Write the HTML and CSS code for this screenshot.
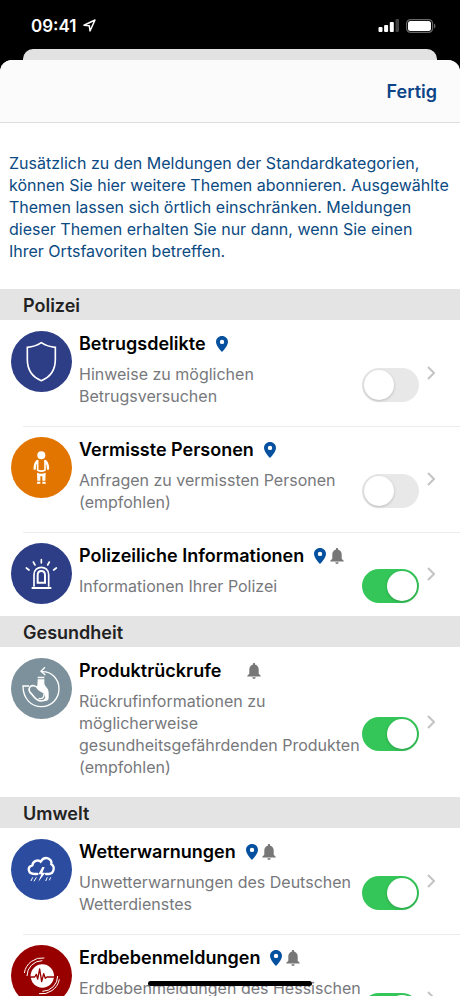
FILE: index.html
```html
<!DOCTYPE html>
<html lang="de">
<head>
<meta charset="utf-8">
<meta name="viewport" content="width=device-width, initial-scale=1">
<title>Themen abonnieren</title>
<link rel="stylesheet" href="styles.css">
</head>
<body>
<svg class="defs" aria-hidden="true">
  <symbol id="pin" viewBox="0 0 12 16"><path fill-rule="evenodd" d="M6 0C2.700 0 0 2.600 0 5.900 0 10 6 16 6 16s6-6 6-10.100C12 2.600 9.300 0 6 0zm0 8.100a2.200 2.200 0 1 1 0-4.400 2.200 2.200 0 0 1 0 4.400z"/></symbol>
  <symbol id="bell" viewBox="0 0 14 16"><path d="M7 0c-.7 0-1.200.5-1.200 1.200v.5C3.600 2.200 2.300 4.100 2.300 6.500v4.200L.3 12.700v.8h13.400v-.8l-2-2V6.500c0-2.400-1.300-4.300-3.500-4.800v-.5C8.200.5 7.700 0 7 0zM5.300 14.300a1.700 1.700 0 0 0 3.400 0z"/></symbol>
  <symbol id="chevron" viewBox="0 0 8 14"><path d="M1 1l6 6-6 6" fill="none" stroke="currentColor" stroke-width="2"/></symbol>
</svg>
<div class="phone">
  <header class="status">
    <div class="clock">
      <span>09:41</span>
      <svg class="location" viewBox="0 0 13 13" aria-hidden="true"><path d="M1 6.300L12 1 7 12 6.300 6.700z" fill="none" stroke="currentColor" stroke-width="1.500" stroke-linejoin="round"/></svg>
    </div>
    <div class="indicators">
      <svg class="signal" viewBox="0 0 20 13" aria-hidden="true"><rect y="8" width="4" height="5" rx="1"/><rect x="5.600" y="6" width="4" height="7" rx="1"/><rect x="11.300" y="3" width="4" height="10" rx="1"/><rect x="17" width="3.500" height="13" rx="1" opacity=".25"/></svg>
      <svg class="battery" viewBox="0 0 30 14" aria-hidden="true"><rect x=".6" y=".6" width="26" height="12.800" rx="4" fill="none" stroke="currentColor" stroke-width="1.200" opacity=".4"/><rect x="2" y="2" width="23" height="10" rx="2.500"/><path d="M28 4.500v5q1.500-.8 1.500-2.500T28 4.500z" opacity=".4"/></svg>
    </div>
  </header>
  <div class="backsheet"></div>
  <main class="sheet">
    <nav class="bar"><button class="done" type="button">Fertig</button></nav>
    <p class="intro">Zusätzlich zu den Meldungen der Standardkategorien, können Sie hier weitere Themen abonnieren. Ausgewählte Themen lassen sich örtlich einschränken. Meldungen dieser Themen erhalten Sie nur dann, wenn Sie einen Ihrer Ortsfavoriten betreffen.</p>

    <h2 class="group">Polizei</h2>
    <ul class="topics">
      <li class="topic">
        <svg class="badge navy" viewBox="0 0 183 183" aria-hidden="true"><path d="M91 35C79 43 65 48 49 49V85C49 116 65 139 91 149C117 139 133 116 133 85V49C117 48 103 43 91 35Z" fill="none" stroke="#fff" stroke-width="5"/></svg>
        <div class="body">
          <div class="heading"><label for="fraud">Betrugsdelikte</label><svg class="pin"><use href="#pin"/></svg></div>
          <div class="detail"><p>Hinweise zu möglichen Betrugsversuchen</p><input class="switch" id="fraud" type="checkbox" role="switch"></div>
        </div>
        <svg class="chevron" aria-hidden="true"><use href="#chevron"/></svg>
      </li>
      <li class="topic">
        <svg class="badge orange" viewBox="0 0 183 183" aria-hidden="true"><g fill="none" stroke="#fff" stroke-linecap="round" stroke-linejoin="round"><path d="M78 73Q71 80 71 95" stroke-width="7"/><path d="M104 73Q111 80 111 95" stroke-width="7"/><path d="M80 71V100Q91 105 102 100V71" stroke-width="5"/></g><g fill="#fff"><circle cx="91" cy="55" r="12"/><path d="M78 107Q91 113 104 107L103 131H94V118H88V131H79ZM79 134H88V140H77ZM94 134H103L105 140H94Z"/></g></svg>
        <div class="body">
          <div class="heading"><label for="missing">Vermisste Personen</label><svg class="pin"><use href="#pin"/></svg></div>
          <div class="detail"><p>Anfragen zu vermissten Personen (empfohlen)</p><input class="switch" id="missing" type="checkbox" role="switch"></div>
        </div>
        <svg class="chevron" aria-hidden="true"><use href="#chevron"/></svg>
      </li>
      <li class="topic">
        <svg class="badge navy" viewBox="0 0 183 183" aria-hidden="true"><g fill="none" stroke="#fff"><path d="M69 131V95C69 66 113 66 113 95V131" stroke-width="5"/><path d="M80 119V97C80 80 102 80 102 97V119Z" stroke-width="6"/><path d="M62 135H121" stroke-width="6"/><path d="M91 50V60M67 57L72 66M115 57L110 66M46 75L54 81M136 75L128 81" stroke-width="5" stroke-linecap="round"/></g></svg>
        <div class="body">
          <div class="heading"><label for="police">Polizeiliche Informationen</label><svg class="pin"><use href="#pin"/></svg><svg class="bell"><use href="#bell"/></svg></div>
          <div class="detail"><p>Informationen Ihrer Polizei</p><input class="switch" id="police" type="checkbox" role="switch" checked></div>
        </div>
        <svg class="chevron" aria-hidden="true"><use href="#chevron"/></svg>
      </li>
    </ul>

    <h2 class="group">Gesundheit</h2>
    <ul class="topics">
      <li class="topic">
        <svg class="badge slate" viewBox="0 0 183 183" aria-hidden="true"><g fill="none" stroke="#fff" stroke-width="4"><path d="M91 41C121 39 144 62 144 92C144 122 121 146 91 146C61 146 36 122 36 84H54"/><path d="M102 28L90 40L103 51"/></g><path d="M80 56H100V61H80ZM80 64H100V76C100 84 113 90 113 104V120Q113 129 102 129H84L76 90Q80 84 80 64Z" fill="#fff"/><path d="M56 88C63 79 76 83 81 92C86 99 96 99 102 108C109 119 103 129 91 129C76 129 68 116 62 108C54 101 52 95 56 88Z" fill="#7c919b" stroke="#fff" stroke-width="5"/><path d="M83 121Q99 126 99 108" fill="none" stroke="#fff" stroke-width="4"/></svg>
        <div class="body">
          <div class="heading"><label for="recall">Produktrückrufe</label><span class="pin"></span><svg class="bell"><use href="#bell"/></svg></div>
          <div class="detail"><p>Rückrufinformationen zu möglicherweise gesundheitsgefährdenden Produkten (empfohlen)</p><input class="switch" id="recall" type="checkbox" role="switch" checked></div>
        </div>
        <svg class="chevron" aria-hidden="true"><use href="#chevron"/></svg>
      </li>
    </ul>

    <h2 class="group">Umwelt</h2>
    <ul class="topics">
      <li class="topic">
        <svg class="badge blue" viewBox="0 0 183 183" aria-hidden="true"><g fill="none" stroke="#fff"><path d="M79 105H70C51 105 47 84 64 79C66 65 82 61 89 68C101 48 124 59 121 76C133 83 129 105 113 105H105" stroke-width="7" stroke-linecap="round"/><path d="M65 115L60 126M76 115L69 127M109 115L104 126M119 115L115 124" stroke-width="3"/></g><path d="M94 84L82 106H91L82 128L103 101H94L101 84Z" fill="#fff"/></svg>
        <div class="body">
          <div class="heading"><label for="weather">Wetterwarnungen</label><svg class="pin"><use href="#pin"/></svg><svg class="bell"><use href="#bell"/></svg></div>
          <div class="detail"><p>Unwetterwarnungen des Deutschen Wetterdienstes</p><input class="switch" id="weather" type="checkbox" role="switch" checked></div>
        </div>
        <svg class="chevron" aria-hidden="true"><use href="#chevron"/></svg>
      </li>
      <li class="topic">
        <svg class="badge red" viewBox="0 0 183 183" aria-hidden="true"><circle cx="94" cy="93" r="35" fill="#fff"/><g fill="none" stroke="#fff" stroke-width="3"><path d="M48 93A46 46 0 0 1 94 47M40 84A54 54 0 0 1 100 39M140 93A46 46 0 0 1 94 139M145 103A54 54 0 0 1 84 146"/></g><path d="M58 96H71L76 88L80 102L86 72L92 110L98 86L103 100L108 96H130" fill="none" stroke="#980000" stroke-width="4" stroke-linejoin="round"/></svg>
        <div class="body">
          <div class="heading"><label for="quake">Erdbebenmeldungen</label><svg class="pin"><use href="#pin"/></svg><svg class="bell"><use href="#bell"/></svg></div>
          <div class="detail"><p>Erdbebenmeldungen des Hessischen Landesamtes für Naturschutz, Umwelt und Geologie</p><input class="switch" id="quake" type="checkbox" role="switch" checked></div>
        </div>
        <svg class="chevron" aria-hidden="true"><use href="#chevron"/></svg>
      </li>
    </ul>
  </main>
  <div class="home"></div>
</div>
</body>
</html>
```
FILE: styles.css
```css
* { box-sizing: border-box; }

body {
  margin: 0;
  background: #000;
  font-family: Inter, "Liberation Sans", sans-serif;
  font-size: 16px;
  line-height: 22px;
}

h2, p, ul { margin: 0; padding: 0; }

.defs { position: absolute; width: 0; height: 0; }

.phone {
  position: relative;
  display: flex;
  flex-direction: column;
  height: 100vh;
  overflow: hidden;
}

.status {
  display: flex;
  flex: none;
  justify-content: space-between;
  align-items: center;
  height: 49px;
  padding: 2px 24px 0 31px;
  color: #fff;
}

.clock, .indicators { display: flex; align-items: center; }
.clock { gap: 7px; font-size: 17px; font-weight: 600; }
.indicators { gap: 7px; }
.location { width: 13px; height: 13px; }
.signal { width: 21px; height: 13px; fill: currentColor; }
.battery { width: 30px; height: 14px; fill: currentColor; }

.backsheet {
  flex: none;
  height: 11px;
  margin: 0 23px;
  border-radius: 10px 10px 0 0;
  background: #e2e2e2;
}

.sheet {
  flex: 1;
  min-height: 0;
  overflow: hidden;
  border-radius: 12px 12px 0 0;
  background: #fff;
}

.bar {
  display: flex;
  justify-content: flex-end;
  align-items: center;
  height: 63px;
  padding: 2px 23px 0;
  border-bottom: 1px solid #dedede;
  background: #fbfbfb;
}

.done {
  padding: 0;
  border: 0;
  background: none;
  color: #0b4587;
  font: inherit;
  font-size: 18px;
  font-weight: 600;
}

.intro { padding: 29px 9px 27px; color: #0b4a82; }

.group {
  padding: 6px 23px 3px;
  background: #e4e4e4;
  color: #222;
  font-size: 18px;
  font-weight: 600;
}

.topics { list-style: none; }

.topic {
  display: flex;
  align-items: flex-start;
  padding: 11px 25px 12px 11px;
}

.topic + .topic {
  background: linear-gradient(#ececec, #ececec) 23px 0 / 100% 1px no-repeat;
}

.badge { flex: none; width: 61px; height: 61px; border-radius: 50%; }
.navy { background: #2d3e86; }
.orange { background: #e27500; }
.slate { background: #7c919b; }
.blue { background: #2c4c9f; }
.red { background: #980000; }

.body { flex: 1; min-width: 0; margin-left: 7px; }

.heading {
  display: flex;
  align-items: center;
  height: 26px;
  margin-bottom: 6px;
  color: #000;
  font-size: 18px;
  font-weight: 600;
}

.pin { width: 12px; height: 16px; margin-left: 10px; fill: #05519f; }
.bell { width: 14px; height: 16px; margin-left: 4px; fill: #777; }

.detail { display: flex; align-items: center; margin-bottom: 7px; color: #77787c; }
.detail p { flex: 1; min-width: 0; }

.switch {
  flex: none;
  display: grid;
  align-items: center;
  appearance: none;
  width: 57px;
  height: 34px;
  margin: -6px 0;
  padding: 2px;
  border-radius: 17px;
  background: #e8e8e8;
}

.switch::before {
  content: "";
  width: 30px;
  height: 30px;
  border-radius: 50%;
  background: #fff;
  box-shadow: 0 1px 3px #0003;
}

.switch:checked { background: #34c658; }
.switch:checked::before { justify-self: end; }

.chevron {
  flex: none;
  align-self: center;
  width: 8px;
  height: 14px;
  margin-left: 8px;
  color: #c4c4c7;
}

.home {
  position: absolute;
  bottom: 10px;
  left: 50%;
  width: 164px;
  height: 5px;
  margin-left: -82px;
  border-radius: 3px;
  background: #000;
}
```
